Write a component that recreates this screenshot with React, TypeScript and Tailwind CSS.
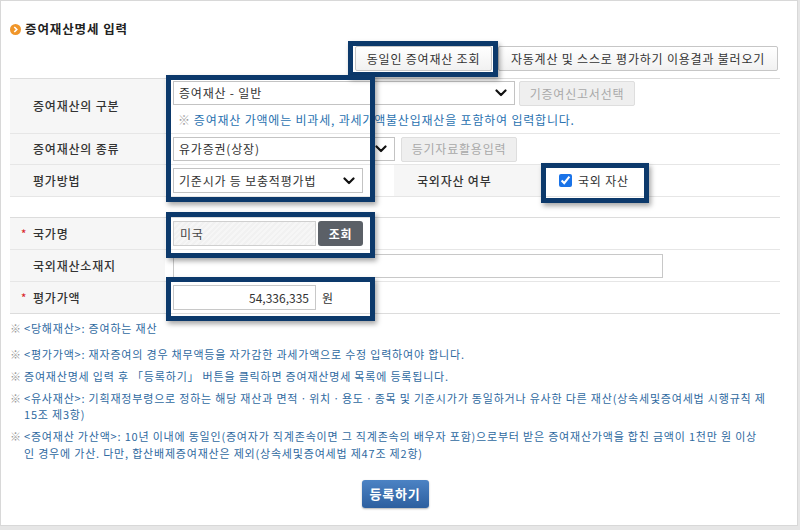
import React from 'react';

const Chevron = () => (
  <svg width="12" height="8" viewBox="0 0 12 8" className="shrink-0">
    <polyline points="1.5,1.5 6,6 10.5,1.5" fill="none" stroke="#111" strokeWidth="2.2" strokeLinecap="round" strokeLinejoin="round" />
  </svg>
);

const SelectBox = ({ text, w, h }: { text: string; w: string; h: string }) => (
  <div className={`${w} ${h} flex items-center justify-between border border-[#c3c3c3] bg-white pl-[5px] pr-[7px] text-[12px] text-[#333]`}>
    <span>{text}</span>
    <Chevron />
  </div>
);

const DisabledBtn = ({ children }: { children: React.ReactNode }) => (
  <div className="flex h-[25px] w-[116px] items-center justify-center rounded-[2px] border border-[#dedede] bg-[#efefef] text-[12px] text-[#a9a9a9]">
    {children}
  </div>
);

const Label = ({ children, star, w = 'w-[155px]' }: { children: React.ReactNode; star?: boolean; w?: string }) => (
  <div className={`${w} flex shrink-0 items-center self-stretch bg-[#f6f6f6] text-[12px] font-medium text-[#333] ${star ? 'pl-[11px]' : 'pl-[23px]'}`}>
    {star && <span className="w-[12px] text-[11px] text-[#d9262b]">*</span>}
    {children}
  </div>
);

const Note = ({ children, className = '' }: { children: React.ReactNode; className?: string }) => (
  <div className={`flex whitespace-nowrap text-[11px] leading-[16px] tracking-[0.8px] text-[#2f6a9f] ${className}`}>
    <span className="w-[14px] shrink-0 tracking-normal text-[#9a9a9a]">※</span>
    <div>{children}</div>
  </div>
);

const Highlight = ({ cls }: { cls: string }) => (
  <div className={`absolute border-[5px] border-[#0c396b] shadow-[2px_3px_5px_rgba(0,0,0,0.35)] ${cls}`} />
);

export default function App() {
  return (
    <div className="relative h-[530px] w-[800px] bg-[#e6e6e6] font-['Noto_Sans_CJK_KR','Noto_Sans',sans-serif] tracking-[0.8px]">
      <div className="h-[526px] w-[798px] border border-[#d8d8d8] bg-white pl-[9px] pt-[19px]">
        {/* title */}
        <div className="flex h-[18px] items-center gap-[4px]">
          <svg width="11" height="11" viewBox="0 0 11 11">
            <circle cx="5.5" cy="5.5" r="5.5" fill="#f0962a" />
            <polyline points="4.3,3 6.8,5.5 4.3,8" fill="none" stroke="#fff" strokeWidth="1.6" />
          </svg>
          <span className="text-[12.5px] font-bold tracking-[0.9px] text-[#222]">증여재산명세 입력</span>
        </div>

        {/* top buttons */}
        <div className="mt-[8px] flex w-[770px] justify-end gap-[6px] pr-[2px]">
          <div className="flex h-[25px] w-[137px] items-center justify-center rounded-[2px] border border-[#c6c6c6] bg-gradient-to-b from-white to-[#f1f1f1] text-[12px] text-[#333]">
            동일인 증여재산 조회
          </div>
          <div className="flex h-[25px] w-[280px] items-center justify-center rounded-[2px] border border-[#c6c6c6] bg-gradient-to-b from-white to-[#f1f1f1] text-[12px] text-[#333]">
            자동계산 및 스스로 평가하기 이용결과 불러오기
          </div>
        </div>

        {/* table 1 */}
        <div className="mt-[7px] w-[770px] border-t border-[#dcdcdc]">
          <div className="flex h-[55px] border-b border-[#e6e6e6]">
            <Label>증여재산의 구분</Label>
            <div className="pl-[8px] pt-[2px]">
              <div className="flex gap-[4px]">
                <SelectBox text="증여재산 - 일반" w="w-[342px]" h="h-[24px]" />
                <DisabledBtn>기증여신고서선택</DisabledBtn>
              </div>
              <div className="mt-[6px] flex pl-[5px] text-[12px] leading-[16px] text-[#2a72b0]">
                <span className="mr-[3px] text-[#a0a0a0]">※</span>
                증여재산 가액에는 비과세, 과세가액불산입재산을 포함하여 입력합니다.
              </div>
            </div>
          </div>
          <div className="flex h-[31px] items-center border-b border-[#e6e6e6]">
            <Label>증여재산의 종류</Label>
            <div className="flex items-center gap-[6px] pl-[8px]">
              <SelectBox text="유가증권(상장)" w="w-[222px]" h="h-[24px]" />
              <DisabledBtn>등기자료활용입력</DisabledBtn>
            </div>
          </div>
          <div className="flex h-[32px] items-center border-b border-[#e6e6e6]">
            <Label>평가방법</Label>
            <div className="flex w-[229px] items-center pl-[8px]">
              <SelectBox text="기준시가 등 보충적평가법" w="w-[190px]" h="h-[25px]" />
            </div>
            <Label w="w-[151px]">국외자산 여부</Label>
            <div className="flex items-center gap-[6px] pl-[14px] text-[12px] text-[#333]">
              <input type="checkbox" checked readOnly className="h-[13px] w-[13px] accent-[#1a73e8]" />
              국외 자산
            </div>
          </div>
        </div>

        {/* table 2 */}
        <div className="mt-[20px] w-[770px] border-t border-[#dcdcdc]">
          <div className="flex h-[32px] items-center border-b border-[#e6e6e6]">
            <Label star>국가명</Label>
            <div className="flex items-center gap-[2px] pl-[8px]">
              <div className="flex h-[25px] w-[143px] items-center border border-[#cfcfcf] bg-[repeating-linear-gradient(135deg,#f1f1f1_0px,#f1f1f1_2px,#f6f6f6_2px,#f6f6f6_4px)] pl-[6px] text-[12px] text-[#444]">
                미국
              </div>
              <div className="flex h-[25px] w-[45px] items-center justify-center rounded-[3px] bg-[#5b6067] text-[12px] font-bold text-white">
                조회
              </div>
            </div>
          </div>
          <div className="flex h-[32px] items-center border-b border-[#e6e6e6]">
            <Label>국외재산소재지</Label>
            <div className="pl-[8px]">
              <div className="h-[24px] w-[490px] border border-[#c8c8c8] bg-white" />
            </div>
          </div>
          <div className="flex h-[32px] items-center border-b border-[#dcdcdc]">
            <Label star>평가가액</Label>
            <div className="flex items-center gap-[6px] pl-[8px] text-[12px] text-[#333]">
              <div className="flex h-[25px] w-[143px] items-center justify-end border border-[#c8c8c8] bg-white pr-[6px] tracking-normal">
                54,336,335
              </div>
              원
            </div>
          </div>
        </div>

        {/* notes */}
        <div className="w-[770px]">
          <Note className="mt-[6px]">&lt;당해재산&gt;: 증여하는 재산</Note>
          <Note className="mt-[10px]">&lt;평가가액&gt;: 재자증여의 경우 채무액등을 자가감한 과세가액으로 수정 입력하여야 합니다.</Note>
          <Note className="mt-[6px]">증여재산명세 입력 후 「등록하기」 버튼을 클릭하면 증여재산명세 목록에 등록됩니다.</Note>
          <Note className="mt-[6px]">
            &lt;유사재산&gt;: 기획재정부령으로 정하는 해당 재산과 면적ㆍ위치ㆍ용도ㆍ종목 및 기준시가가 동일하거나 유사한 다른 재산(상속세및증여세법 시행규칙 제
            <br />
            15조 제3항)
          </Note>
          <Note className="mt-[6px] leading-[17px]">
            &lt;증여재산 가산액&gt;: 10년 이내에 동일인(증여자가 직계존속이면 그 직계존속의 배우자 포함)으로부터 받은 증여재산가액을 합친 금액이 1천만 원 이상
            <br />
            인 경우에 가산. 다만, 합산배제증여재산은 제외(상속세및증여세법 제47조 제2항)
          </Note>
        </div>

        <div className="mt-[18px] flex w-[770px] justify-center">
          <div className="flex h-[28px] w-[67px] items-center justify-center rounded-[3px] bg-gradient-to-b from-[#4c83c4] to-[#2d5f9f] text-[13px] font-bold text-white shadow-[0_1px_2px_rgba(0,0,0,0.3)]">
            등록하기
          </div>
        </div>
      </div>

      {/* annotation boxes */}
      <Highlight cls="left-[348px] top-[41px] h-[36px] w-[150px]" />
      <Highlight cls="left-[166px] top-[75px] h-[127px] w-[209px]" />
      <Highlight cls="left-[541px] top-[163px] h-[40px] w-[108px]" />
      <Highlight cls="left-[166px] top-[212px] h-[46px] w-[209px]" />
      <Highlight cls="left-[166px] top-[277px] h-[44px] w-[209px]" />
    </div>
  );
}
